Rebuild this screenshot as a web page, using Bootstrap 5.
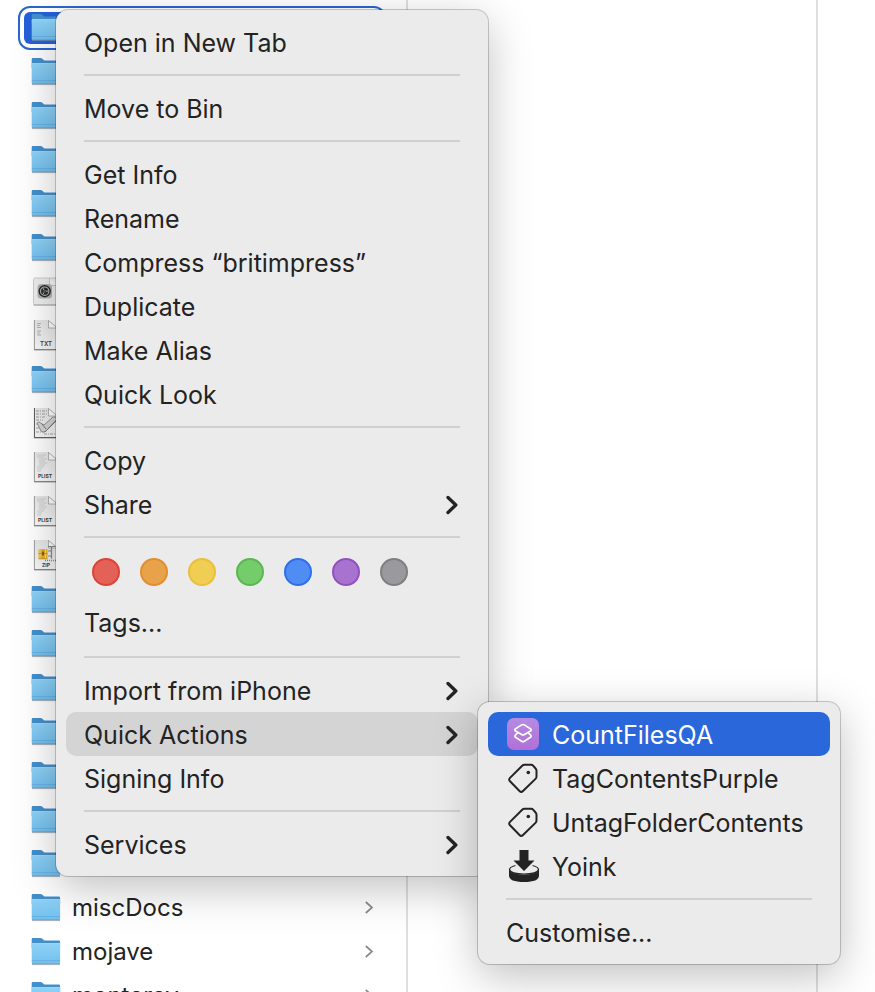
<!DOCTYPE html>
<html lang="en-GB">
<head>
<meta charset="utf-8">
<meta name="viewport" content="width=device-width, initial-scale=1">
<title>Finder – Quick Actions</title>
<link href="https://cdn.jsdelivr.net/npm/bootstrap@5.3.0/dist/css/bootstrap.min.css" rel="stylesheet">
<style>
  body { font-family: Inter, "Liberation Sans", sans-serif; font-size: 25px; line-height: 32px; color: #232323; background: #fff; }
  .finder { height: 100vh; }
  .pane { border-right: 2px solid #dfdfdf; }
  .pane-files { flex: 0 0 408px; padding: 12px 26px 0 24px; font-size: 24px; }
  .pane-preview { flex: 0 0 410px; }
  .files { gap: 12px; }
  .file-link { height: 32px; padding: 0 6px 0 7px; gap: 11px; color: inherit; border-radius: 4px; }
  .file-link.selected { background: #2460d8; outline: 2px solid #2a66d0; outline-offset: 4px; border-radius: 6px; }
  .file-link svg { flex: none; }

  .ctx-menu { position: absolute; background: #ebebeb; border-radius: 12px; padding: 10px;
    box-shadow: 0 0 0 1px rgba(0,0,0,.2), 0 12px 44px rgba(0,0,0,.25); }
  .ctx-main { left: 56px; top: 10px; width: 432px; }
  .ctx-sub { left: 100%; top: -10px; width: 362px; }
  .ctx-item { width: 100%; height: 44px; padding: 2px 18px 0; gap: 12px; border: 0; background: transparent; color: inherit; border-radius: 10px; text-align: left; white-space: nowrap; }
  .ctx-item.open { background: #d4d4d4; }
  .ctx-item.active { background: #2a67da; color: #fff; }
  .ctx-line { height: 2px; margin: 10px 18px; background: #d0d0d0; }
  .ctx-tags { height: 52px; padding: 10px 26px 0; gap: 20px; }
  .ctx-tags-label { padding-bottom: 2px; }
  .tag-dot { width: 28px; height: 28px; padding: 0; border: 2px solid; border-radius: 50%; }
  .dot-red { background: #e46157; border-color: #dc4437; }
  .dot-orange { background: #e8a249; border-color: #e08e30; }
  .dot-yellow { background: #f0ce53; border-color: #e9c039; }
  .dot-green { background: #74cc6a; border-color: #5ab850; }
  .dot-blue { background: #4f8cf3; border-color: #2f6fe8; }
  .dot-purple { background: #a872d0; border-color: #9252be; }
  .dot-grey { background: #99999e; border-color: #7f7f83; }
</style>
<script src="https://cdn.jsdelivr.net/npm/bootstrap@5.3.0/dist/js/bootstrap.bundle.min.js"></script>
</head>
<body class="overflow-hidden">

<svg width="0" height="0" class="position-absolute" aria-hidden="true">
  <defs>
    <linearGradient id="gFront" x1="0" y1="0" x2="0" y2="1"><stop offset="0" stop-color="#8fd2f7"/><stop offset="1" stop-color="#72c0ef"/></linearGradient>
    <linearGradient id="gPage" x1="0" y1="0" x2="0" y2="1"><stop offset="0" stop-color="#e6e6e6"/><stop offset="1" stop-color="#f8f8f8"/></linearGradient>
    <linearGradient id="gApp" x1="0" y1="0" x2="0" y2="1"><stop offset="0" stop-color="#b48be3"/><stop offset="1" stop-color="#b26fd6"/></linearGradient>
  </defs>
  <symbol id="folder" viewBox="0 0 30 32">
    <path d="M1 28.600h28" stroke="#8a8f94" stroke-width="1" opacity=".7"/>
    <path d="M.7 3.200Q.7 2 1.900 2h7.600q.9 0 1.600.6l1.600 1.300q.7.6 1.700.6h13.500q1.200 0 1.200 1.200V12H.7z" fill="#438fcb"/>
    <path d="M.7 8.400Q.7 7.200 1.900 7.200h26q1.200 0 1.200 1.200v18.400q0 1.200-1.200 1.200h-26Q.7 28 .7 26.800z" fill="url(#gFront)"/>
    <path d="M1 7.500h28" stroke="#a5daf8" stroke-width=".8"/>
    <path d="M1 24.600h28" stroke="#60abdc" stroke-width=".7"/>
    <path d="M1 27.700h28" stroke="#5ba8d9" stroke-width=".8"/>
  </symbol>
  <symbol id="page" viewBox="0 0 30 32">
    <path d="M3.500-.5h13l8 8v22h-21z" fill="url(#gPage)" stroke="#b5b5b5"/>
    <path d="M24 7v22.500h3V9z" fill="url(#gPage)"/>
    <path d="M3 29.700h24" stroke="#858585" stroke-width="1.300"/>
    <path d="M3.400 0v29.500" stroke="#a0a0a0" stroke-width=".8"/>
    <path d="M17.500.5v7.500h9z" fill="#fff" stroke="#adadad" stroke-width=".9"/>
  </symbol>
  <symbol id="chev" viewBox="0 0 14 22">
    <path d="M2 3.500 9.800 11 2 18.500" fill="none" stroke="currentColor" stroke-width="3.300" stroke-linecap="round" stroke-linejoin="round"/>
  </symbol>
  <symbol id="chev-thin" viewBox="0 0 10 14">
    <path d="M1.800 1 8 6.500 1.800 12" fill="none" stroke="#8b8b8b" stroke-width="1.700"/>
  </symbol>
  <symbol id="tag" viewBox="0 0 34 34">
    <path d="M18.500 2.800h6.600q1.300 0 2.200 1l2.300 2.700q.9 1 .9 2.300v5.700q0 1.400-1 2.400L17 29q-1.800 1.700-3.500 0L4 19.300q-1.700-1.700 0-3.400L16.200 3.800q1-1 2.300-1z" fill="none" stroke="currentColor" stroke-width="2" stroke-linejoin="round"/>
    <circle cx="22.300" cy="10.500" r="1.800" fill="currentColor"/>
  </symbol>
</svg>

<main class="finder d-flex position-relative overflow-hidden">
  <section class="pane pane-files overflow-hidden" aria-label="Files">
    <ul class="files list-unstyled d-flex flex-column mb-0">
      <li><a href="#" class="file-link selected d-flex align-items-center text-decoration-none" aria-label="Selected folder"><svg width="30" height="32"><use href="#folder"/></svg></a></li>
      <li><a href="#" class="file-link d-flex align-items-center" aria-label="Folder"><svg width="30" height="32"><use href="#folder"/></svg></a></li>
      <li><a href="#" class="file-link d-flex align-items-center" aria-label="Folder"><svg width="30" height="32"><use href="#folder"/></svg></a></li>
      <li><a href="#" class="file-link d-flex align-items-center" aria-label="Folder"><svg width="30" height="32"><use href="#folder"/></svg></a></li>
      <li><a href="#" class="file-link d-flex align-items-center" aria-label="Folder"><svg width="30" height="32"><use href="#folder"/></svg></a></li>
      <li><a href="#" class="file-link d-flex align-items-center" aria-label="Folder"><svg width="30" height="32"><use href="#folder"/></svg></a></li>
      <li><a href="#" class="file-link d-flex align-items-center" aria-label="Settings file"><svg width="30" height="32" viewBox="0 0 30 32">
        <rect x="2.500" y="2" width="26" height="27" rx="1.500" fill="#eee" stroke="#c4c4c4" stroke-width=".8"/>
        <path d="M2.500 29h26" stroke="#aaa"/><path d="M18.500 2v7.500h9" fill="#f8f8f8" stroke="#c0c0c0" stroke-width=".8"/>
        <rect x="6.500" y="8" width="14.500" height="14.500" rx="3.500" fill="#b0b3b3"/>
        <circle cx="13.700" cy="15.200" r="6.200" fill="#292c2d"/>
        <circle cx="13.700" cy="15.200" r="4.200" fill="none" stroke="#b5b8b8" stroke-width="1.100"/>
        <path d="M13.700 15.200h4M13.700 15.200l-2-3.500M13.700 15.200l-2 3.500" stroke="#b5b8b8" stroke-width="1"/>
        <circle cx="13.700" cy="15.200" r="1.500" fill="#555"/></svg></a></li>
      <li><a href="#" class="file-link d-flex align-items-center" aria-label="Text file"><svg width="30" height="32" viewBox="0 0 30 32"><use href="#page" width="30" height="32"/>
        <path d="M6 3.500h4M6 5.500h3M6 7.500h4M6 11h4M6 13h3M6 15h4" stroke="#b4b4b4"/>
        <text x="9" y="26" font-size="6" font-weight="600" fill="#3c3c3c">TXT</text></svg></a></li>
      <li><a href="#" class="file-link d-flex align-items-center" aria-label="Folder"><svg width="30" height="32"><use href="#folder"/></svg></a></li>
      <li><a href="#" class="file-link d-flex align-items-center" aria-label="Script"><svg width="30" height="32" viewBox="0 0 30 32"><use href="#page" width="30" height="32"/>
        <path d="M5 3h11M5 6h12M5 9h9M5 12h7M5 16h4M5 20h4M5 24h9M13 26h11" stroke="#a0a0a0" stroke-width="1.200" stroke-dasharray="3 1 1 1"/>
        <path d="M7 17q-2-3 1-3l5 3 9-8q3-1 4 2l-11 12q-3 2-5 0z" fill="#d4d4d4" stroke="#888" stroke-width=".9"/>
        <path d="M11 16l4 5M14 24l11-11" stroke="#777"/>
        <path d="M3.500 0v29.500h23" fill="none" stroke="#606060"/></svg></a></li>
      <li><a href="#" class="file-link d-flex align-items-center" aria-label="Property list"><svg width="30" height="32" viewBox="0 0 30 32"><use href="#page" width="30" height="32"/>
        <path d="M6 3h9M6 5h7M8 7h8M8 9h6M8 11h8M8 13h6M6 15h7M6 17h5M6 19h4" stroke="#c6c6c6" stroke-width=".8"/>
        <text x="7" y="26" font-size="5" font-weight="700" fill="#3c3c3c">PLIST</text></svg></a></li>
      <li><a href="#" class="file-link d-flex align-items-center" aria-label="Property list"><svg width="30" height="32" viewBox="0 0 30 32"><use href="#page" width="30" height="32"/>
        <path d="M6 3h9M6 5h7M8 7h8M8 9h6M8 11h8M8 13h6M6 15h7M6 17h5M6 19h4" stroke="#c6c6c6" stroke-width=".8"/>
        <text x="7" y="26" font-size="5" font-weight="700" fill="#3c3c3c">PLIST</text></svg></a></li>
      <li><a href="#" class="file-link d-flex align-items-center" aria-label="Zip archive"><svg width="30" height="32" viewBox="0 0 30 32"><use href="#page" width="30" height="32"/>
        <rect x="7.500" y="9" width="9" height="10" rx="1" fill="#e9b32c"/><path d="M9 9v10M14.500 9v10" stroke="#fbdf7c"/>
        <path d="M7.500 13.500h9M7.500 18.800h9" stroke="#c08f20" stroke-width=".8"/><rect x="11" y="11.500" width="2" height="4" fill="#8a6210"/>
        <path d="M17 6.500h7M20.500 6.500v12M17 11h3M17 16h3" stroke="#888" stroke-width="1.200"/><path d="M14 20.500h11" stroke="#8c8c8c" stroke-width="1.500" stroke-dasharray="1 1"/>
        <text x="11" y="27" font-size="5" font-weight="700" fill="#3c3c3c">ZIP</text></svg></a></li>
      <li><a href="#" class="file-link d-flex align-items-center" aria-label="Folder"><svg width="30" height="32"><use href="#folder"/></svg></a></li>
      <li><a href="#" class="file-link d-flex align-items-center" aria-label="Folder"><svg width="30" height="32"><use href="#folder"/></svg></a></li>
      <li><a href="#" class="file-link d-flex align-items-center" aria-label="Folder"><svg width="30" height="32"><use href="#folder"/></svg></a></li>
      <li><a href="#" class="file-link d-flex align-items-center" aria-label="Folder"><svg width="30" height="32"><use href="#folder"/></svg></a></li>
      <li><a href="#" class="file-link d-flex align-items-center" aria-label="Folder"><svg width="30" height="32"><use href="#folder"/></svg></a></li>
      <li><a href="#" class="file-link d-flex align-items-center" aria-label="Folder"><svg width="30" height="32"><use href="#folder"/></svg></a></li>
      <li><a href="#" class="file-link d-flex align-items-center" aria-label="Folder"><svg width="30" height="32"><use href="#folder"/></svg></a></li>
      <li><a href="#" class="file-link d-flex align-items-center text-decoration-none"><svg width="30" height="32"><use href="#folder"/></svg><span class="flex-grow-1">miscDocs</span><svg width="10" height="14"><use href="#chev-thin"/></svg></a></li>
      <li><a href="#" class="file-link d-flex align-items-center text-decoration-none"><svg width="30" height="32"><use href="#folder"/></svg><span class="flex-grow-1">mojave</span><svg width="10" height="14"><use href="#chev-thin"/></svg></a></li>
      <li><a href="#" class="file-link d-flex align-items-center text-decoration-none"><svg width="30" height="32"><use href="#folder"/></svg><span class="flex-grow-1">monterey</span><svg width="10" height="14"><use href="#chev-thin"/></svg></a></li>
    </ul>
  </section>
  <section class="pane pane-preview" aria-label="Preview"></section>

  <ul class="ctx-menu ctx-main list-unstyled mb-0">
    <li><button type="button" class="ctx-item d-flex align-items-center">Open in New Tab</button></li>
    <li class="ctx-line"></li>
    <li><button type="button" class="ctx-item d-flex align-items-center">Move to Bin</button></li>
    <li class="ctx-line"></li>
    <li><button type="button" class="ctx-item d-flex align-items-center">Get Info</button></li>
    <li><button type="button" class="ctx-item d-flex align-items-center">Rename</button></li>
    <li><button type="button" class="ctx-item d-flex align-items-center">Compress “britimpress”</button></li>
    <li><button type="button" class="ctx-item d-flex align-items-center">Duplicate</button></li>
    <li><button type="button" class="ctx-item d-flex align-items-center">Make Alias</button></li>
    <li><button type="button" class="ctx-item d-flex align-items-center">Quick Look</button></li>
    <li class="ctx-line"></li>
    <li><button type="button" class="ctx-item d-flex align-items-center">Copy</button></li>
    <li><button type="button" class="ctx-item d-flex align-items-center justify-content-between">Share<svg width="14" height="22"><use href="#chev"/></svg></button></li>
    <li class="ctx-line"></li>
    <li class="ctx-tags d-flex">
      <button type="button" class="tag-dot dot-red" aria-label="Red"></button>
      <button type="button" class="tag-dot dot-orange" aria-label="Orange"></button>
      <button type="button" class="tag-dot dot-yellow" aria-label="Yellow"></button>
      <button type="button" class="tag-dot dot-green" aria-label="Green"></button>
      <button type="button" class="tag-dot dot-blue" aria-label="Blue"></button>
      <button type="button" class="tag-dot dot-purple" aria-label="Purple"></button>
      <button type="button" class="tag-dot dot-grey" aria-label="Grey"></button>
    </li>
    <li class="ctx-tags-label"><button type="button" class="ctx-item d-flex align-items-center">Tags...</button></li>
    <li class="ctx-line"></li>
    <li><button type="button" class="ctx-item d-flex align-items-center justify-content-between">Import from iPhone<svg width="14" height="22"><use href="#chev"/></svg></button></li>
    <li class="position-relative">
      <button type="button" class="ctx-item open d-flex align-items-center justify-content-between" aria-expanded="true">Quick Actions<svg width="14" height="22"><use href="#chev"/></svg></button>
      <ul class="ctx-menu ctx-sub list-unstyled">
        <li><button type="button" class="ctx-item active d-flex align-items-center"><svg width="34" height="34" viewBox="0 1 34 34" aria-hidden="true">
          <rect x="1" y="1" width="32" height="32" rx="7" fill="url(#gApp)"/>
          <g fill="none" stroke="#fff" stroke-width="1.700" stroke-linejoin="round"><path d="M17 7.500q.7 0 1.400.4l6 3.900q1.600 1.100 0 2.200l-6 3.600q-1.400.8-2.800 0l-6-3.600q-1.600-1.100 0-2.200l6-3.900q.7-.4 1.400-.4z"/><path d="M12 15.500l-2.400 2.400q-1.400 1.300 0 2.400l6 4q1.400.8 2.800 0l6-4q1.400-1.100 0-2.400L22 15.500"/></g></svg>CountFilesQA</button></li>
        <li><button type="button" class="ctx-item d-flex align-items-center"><svg width="34" height="34" aria-hidden="true"><use href="#tag"/></svg>TagContentsPurple</button></li>
        <li><button type="button" class="ctx-item d-flex align-items-center"><svg width="34" height="34" aria-hidden="true"><use href="#tag"/></svg>UntagFolderContents</button></li>
        <li><button type="button" class="ctx-item d-flex align-items-center"><svg width="34" height="34" viewBox="0 1 34 34" aria-hidden="true" fill="currentColor">
          <path d="M13.500 1h9v10.500h6L18 22 7.500 11.500h6z"/>
          <path d="M3 20.500q2 5 15 5t15-5v6q0 6.500-15 6.500T3 26.500z"/>
          <path d="M9.500 16.500q-6 1.500-6 4 1 4.500 14.500 4.500t14.500-4.500q0-2.500-6-4" fill="none" stroke="currentColor" stroke-width="1.200"/></svg>Yoink</button></li>
        <li class="ctx-line"></li>
        <li><button type="button" class="ctx-item d-flex align-items-center">Customise...</button></li>
      </ul>
    </li>
    <li><button type="button" class="ctx-item d-flex align-items-center">Signing Info</button></li>
    <li class="ctx-line"></li>
    <li><button type="button" class="ctx-item d-flex align-items-center justify-content-between">Services<svg width="14" height="22"><use href="#chev"/></svg></button></li>
  </ul>
</main>
</body>
</html>
